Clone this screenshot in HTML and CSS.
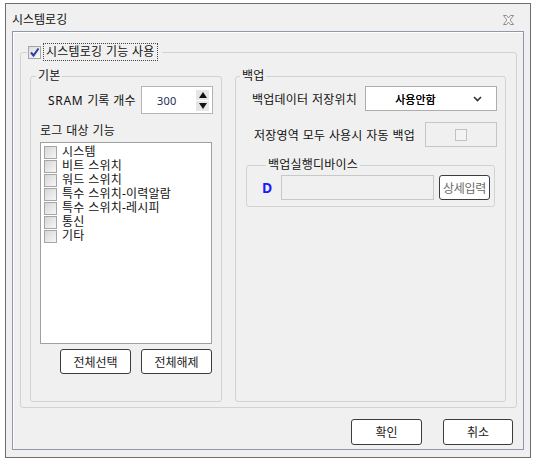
FILE: index.html
```html
<!DOCTYPE html>
<html lang="ko">
<head>
<meta charset="utf-8">
<title>시스템로깅</title>
<link rel="stylesheet" href="styles.css">
</head>
<body>
<div class="window">
  <div class="titlebar">
    <span class="title">시스템로깅</span>
    <svg class="close" width="13" height="10" viewBox="0 0 13 10">
      <path d="M1.5 0.5 H4.5 L6.5 3 L8.5 0.5 H11.5 L8 5 L11.5 9.5 H8.5 L6.5 7 L4.5 9.5 H1.5 L5 5 Z" fill="#fafafa" stroke="#8c8c8c" stroke-width="1" stroke-linejoin="round"/>
    </svg>
  </div>
  <div class="frame">
    <fieldset class="group main">
      <legend class="main-legend"><span class="cb"><svg width="11" height="11" viewBox="0 0 11 11"><path d="M2 5.5 L4.5 8.5 L9.5 1.5" fill="none" stroke="#2b3fa5" stroke-width="2"/></svg></span><span class="focus">시스템로깅 기능 사용</span></legend>
      <div class="columns">
        <fieldset class="group basic">
          <legend class="sub-legend">기본</legend>
          <div class="sram-row">
            <span class="sram-label"><span class="latin">SRAM</span> 기록 개수</span>
            <div class="spin">
              <span class="spin-val">300</span>
              <div class="spin-btns">
                <span class="spin-btn"><span class="tri-up"></span></span>
                <span class="spin-btn"><span class="tri-down"></span></span>
              </div>
            </div>
          </div>
          <div class="list-label">로그 대상 기능</div>
          <ul class="listbox">
            <li><span class="cb"></span><span class="item">시스템</span></li>
            <li><span class="cb"></span><span class="item">비트 스위치</span></li>
            <li><span class="cb"></span><span class="item">워드 스위치</span></li>
            <li><span class="cb"></span><span class="item">특수 스위치-이력알람</span></li>
            <li><span class="cb"></span><span class="item">특수 스위치-레시피</span></li>
            <li><span class="cb"></span><span class="item">통신</span></li>
            <li><span class="cb"></span><span class="item">기타</span></li>
          </ul>
          <div class="list-buttons">
            <button class="btn">전체선택</button>
            <button class="btn">전체해제</button>
          </div>
        </fieldset>
        <fieldset class="group backup">
          <legend class="sub-legend">백업</legend>
          <div class="brow brow-1">
            <span class="brow-label">백업데이터 저장위치</span>
            <div class="select">
              <span class="select-val">사용안함</span>
              <svg class="chev" width="9" height="6" viewBox="0 0 9 6"><path d="M1 1 L4.5 4.5 L8 1" fill="none" stroke="#333" stroke-width="1.6"/></svg>
            </div>
          </div>
          <div class="brow brow-2">
            <span class="brow-label">저장영역 모두 사용시 자동 백업</span>
            <div class="dis-box"><span class="cb cb-dis"></span></div>
          </div>
          <fieldset class="group device">
            <legend class="sub-legend dev-legend">백업실행디바이스</legend>
            <div class="dev-row">
              <span class="dev-d">D</span>
              <div class="dev-input"></div>
              <button class="btn btn-detail">상세입력</button>
            </div>
          </fieldset>
        </fieldset>
      </div>
    </fieldset>
    <div class="dialog-buttons">
      <button class="btn btn-ok">확인</button>
      <button class="btn btn-cancel">취소</button>
    </div>
  </div>
</div>
</body>
</html>
```

FILE: styles.css
```css
* { box-sizing: border-box; }
html, body { margin: 0; padding: 0; background: #fff; }
body {
  font-family: "Noto Sans", "Noto Sans CJK KR", sans-serif;
  font-size: 12px;
  color: #111;
  letter-spacing: 0.2px;
  word-spacing: 0.4px;
}
.window {
  margin: 3px 0 0 5px;
  width: 526px;
  height: 455px;
  border: 1px solid #6e6e6e;
  background: #f0f0f0;
  padding: 0 6px 7px 6px;
}
.titlebar {
  height: 27px;
  display: flex;
  align-items: center;
  justify-content: space-between;
  padding-top: 4px;
}
.title { font-size: 12px; line-height: 16px; letter-spacing: 0; }
.close { margin-right: 9px; }
.frame {
  height: 419px;
  border: 1px solid #8f98aa;
  box-shadow: inset 1px 1px 0 #fff;
  display: flex;
  flex-direction: column;
}
.group {
  margin: 0;
  padding: 0;
  border: 1px solid #d2d2d2;
  border-radius: 3px;
  min-width: 0;
}
.main {
  margin: 11px 6px 0 7px;
  height: 365px;
}
.main-legend {
  margin-left: 6px;
  padding: 0 4px 0 1px;
  height: 18px;
  display: flex;
  align-items: center;
}
.cb {
  display: inline-block;
  width: 13px;
  height: 13px;
  border: 1px solid #a6a6a6;
  background: linear-gradient(135deg, #d6d6d6, #f7f7f7);
  flex: none;
}
.main-legend .cb {
  display: flex;
  align-items: center;
  justify-content: center;
  background: linear-gradient(135deg, #dcdcdc, #f9f9f9);
}
.focus {
  margin-left: 2px;
  border: 1px dotted #444;
  height: 18px;
  line-height: 16px;
  padding: 0 2px 0 2px;
}
.columns {
  display: flex;
  gap: 13px;
  padding: 7px 10px 0 9px;
}
.basic { width: 192px; height: 334px; }
.backup { flex: 1; height: 334px; }
.sub-legend {
  margin-left: 5px;
  padding: 0 2px;
  height: 16px;
  line-height: 16px;
}
.backup > .sub-legend { margin-left: 4px; }
.sram-row {
  display: flex;
  align-items: center;
  margin-top: 2px;
  padding-left: 17px;
}
.sram-label { width: 93px; white-space: nowrap; }
.latin { letter-spacing: 0.7px; }
.spin {
  width: 72px;
  height: 28px;
  background: #fff;
  border: 1px solid #b4b4b4;
  display: flex;
  align-items: center;
  justify-content: space-between;
  padding: 0 3px 0 15px;
}
.spin-val { color: #1d2a5a; letter-spacing: 0.2px; font-size: 11px; }
.spin-btns { display: flex; flex-direction: column; gap: 1px; }
.spin-btn {
  width: 13px;
  height: 10px;
  background: #e6e6e6;
  display: flex;
  align-items: center;
  justify-content: center;
}
.tri-up { width: 0; height: 0; border-left: 4px solid transparent; border-right: 4px solid transparent; border-bottom: 6px solid #111; }
.tri-down { width: 0; height: 0; border-left: 4px solid transparent; border-right: 4px solid transparent; border-top: 6px solid #111; }
.list-label {
  margin-top: 9px;
  padding-left: 9px;
  line-height: 16px;
}
.listbox {
  list-style: none;
  margin: 3px 0 0 9px;
  padding: 2px 0 0 3px;
  width: 172px;
  height: 202px;
  background: #fff;
  border: 1px solid #a0a0a0;
}
.listbox li {
  height: 14px;
  display: flex;
  align-items: center;
  gap: 5px;
}
.item { line-height: 14px; white-space: nowrap; }
.listbox .cb { margin-top: 1px; }
.list-buttons {
  display: flex;
  gap: 10px;
  margin-top: 5px;
  padding-left: 29px;
}
.btn {
  font-family: inherit;
  font-size: 12px;
  letter-spacing: 0;
  color: #222;
  background: #fff;
  border: 1px solid #3c3c3c;
  border-radius: 3px;
  padding: 0;
  width: 71px;
  height: 25px;
}
.brow { display: flex; align-items: center; justify-content: space-between; padding-right: 8px; }
.brow-label { white-space: nowrap; }
.brow-1 { margin-top: 2px; padding-left: 16px; }
.brow-2 { margin-top: 11px; padding-left: 18px; }
.select {
  width: 132px;
  height: 25px;
  background: #fff;
  border: 1px solid #adadad;
  display: flex;
  align-items: center;
}
.select-val { flex: 1; text-align: center; padding-right: 8px; font-size: 11px; letter-spacing: 0; color: #000; text-shadow: 0 0 0.3px #000; }
.chev { margin-right: 14px; }
.dis-box {
  width: 72px;
  height: 25px;
  border: 1px solid #c6c6c6;
  background: #f0f0f0;
  display: flex;
  align-items: center;
  justify-content: center;
}
.cb-dis {
  width: 12px;
  height: 12px;
  border-color: #c2c2c2;
  background: #f3f3f3;
}
.device {
  margin: 10px 10px 0 10px;
  padding: 2px 0 6px 15px;
}
.dev-legend { margin-left: 4px; }
.dev-row { display: flex; align-items: center; }
.dev-d {
  width: 19px;
  color: #1a1aff;
  font-weight: bold;
  font-size: 14px;
  letter-spacing: 0;
}
.dev-input {
  width: 153px;
  height: 25px;
  border: 1px solid #c8c8c8;
  background: #f0f0f0;
}
.btn-detail {
  width: 51px;
  margin-left: 5px;
  color: #6a6a6a;
  letter-spacing: -0.3px;
}
.dialog-buttons {
  display: flex;
  justify-content: flex-end;
  gap: 21px;
  padding-right: 10px;
  margin-top: 11px;
}
.btn-ok { width: 71px; height: 26px; }
.btn-cancel { width: 70px; height: 26px; }
```
